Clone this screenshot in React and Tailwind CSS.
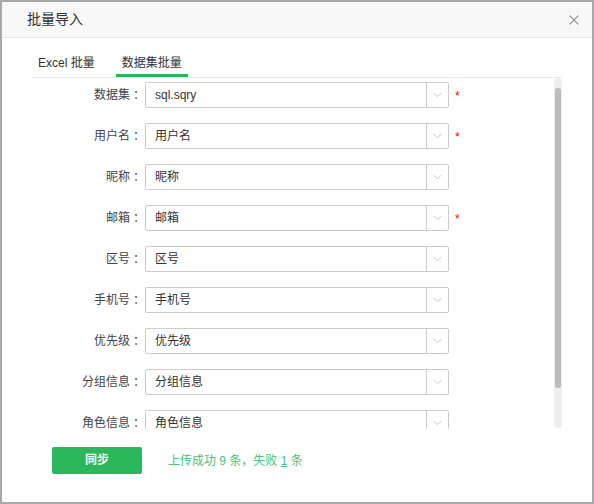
import React from "react"

const FONT = { fontFamily: '"Liberation Sans", "Noto Sans CJK SC", sans-serif' }
const COLON_FONT = { fontFamily: '"Noto Sans CJK JP", sans-serif' }

const fields = [
  { label: "数据集", value: "sql.sqry", required: true },
  { label: "用户名", value: "用户名", required: true },
  { label: "昵称", value: "昵称" },
  { label: "邮箱", value: "邮箱", required: true },
  { label: "区号", value: "区号" },
  { label: "手机号", value: "手机号" },
  { label: "优先级", value: "优先级" },
  { label: "分组信息", value: "分组信息" },
  { label: "角色信息", value: "角色信息" },
  { label: "状态", value: "状态" },
]

function Chevron() {
  return (
    <svg width="9" height="6" viewBox="0 0 9 6" className="block">
      <path d="M0.5 1 L4.5 4.6 L8.5 1" fill="none" stroke="#c8c8c8" strokeWidth="1" />
    </svg>
  )
}

function FieldRow({ label, value, required }) {
  return (
    <div className="flex items-start h-[26px] shrink-0">
      <div className="w-[110px] h-[26px] flex items-center justify-end text-[12px] text-[#444]">
        {label}
        <span style={COLON_FONT}>：</span>
      </div>
      <div className="ml-[3px] w-[304px] h-[26px] flex border border-[#cccccc] rounded-[2px] bg-white">
        <div className="flex-1 flex items-center pl-[9px] text-[12px] text-[#333]">{value}</div>
        <div className="w-[22px] border-l border-[#cccccc] flex items-center justify-center">
          <Chevron />
        </div>
      </div>
      {required && (
        <span className="ml-[6px] mt-[8px] text-[12px] leading-none text-[#ff0000]">*</span>
      )}
    </div>
  )
}

export default function App() {
  return (
    <div style={FONT} className="w-[594px] h-[504px] border-2 border-[#a8a8a8] bg-white flex flex-col">
      <div className="h-[36px] shrink-0 bg-[#f8f8f8] border-b border-[#e6e6e6] flex items-center justify-between pl-[25px] pr-[13px]">
        <span className="text-[14px] text-[#333]">批量导入</span>
        <svg width="10" height="10" viewBox="0 0 10 10">
          <path d="M0.5 0.5 L9.5 9.5 M9.5 0.5 L0.5 9.5" stroke="#999" strokeWidth="1.1" fill="none" />
        </svg>
      </div>

      <div className="ml-[30px] w-[530px] flex flex-col">
        <div className="h-[40px] shrink-0 border-b border-[#e8e8e8] flex items-end text-[12px] leading-[14px] text-[#333]">
          <div className="pl-[6px] pb-[7px]">Excel 批量</div>
          <div className="ml-[21px] w-[72px] text-center pb-[4px] border-b-[3px] border-[#2bb75b]">
            数据集批量
          </div>
        </div>

        <div className="flex h-[351px]">
          <div className="flex-1 overflow-hidden pt-[4px] flex flex-col gap-[15px]">
            {fields.map((f) => (
              <FieldRow key={f.label} {...f} />
            ))}
          </div>
          <div className="w-[8px] h-[350px] bg-[#eeeeee] rounded-[4px] flex justify-center pt-[10px]">
            <div className="w-[6px] h-[300px] bg-[#bbbbbb] rounded-[3px]" />
          </div>
        </div>
      </div>

      <div className="flex items-center pl-[50px] mt-[18px]">
        <button className="w-[90px] h-[27px] bg-[#2bb75b] rounded-[2px] text-white text-[12px] leading-[27px] font-bold">
          同步
        </button>
        <span className="ml-[26px] text-[12px] leading-[16px] text-[#4cc27a]">
          上传成功 9 条，失败 <span className="underline">1</span> 条
        </span>
      </div>
    </div>
  )
}
